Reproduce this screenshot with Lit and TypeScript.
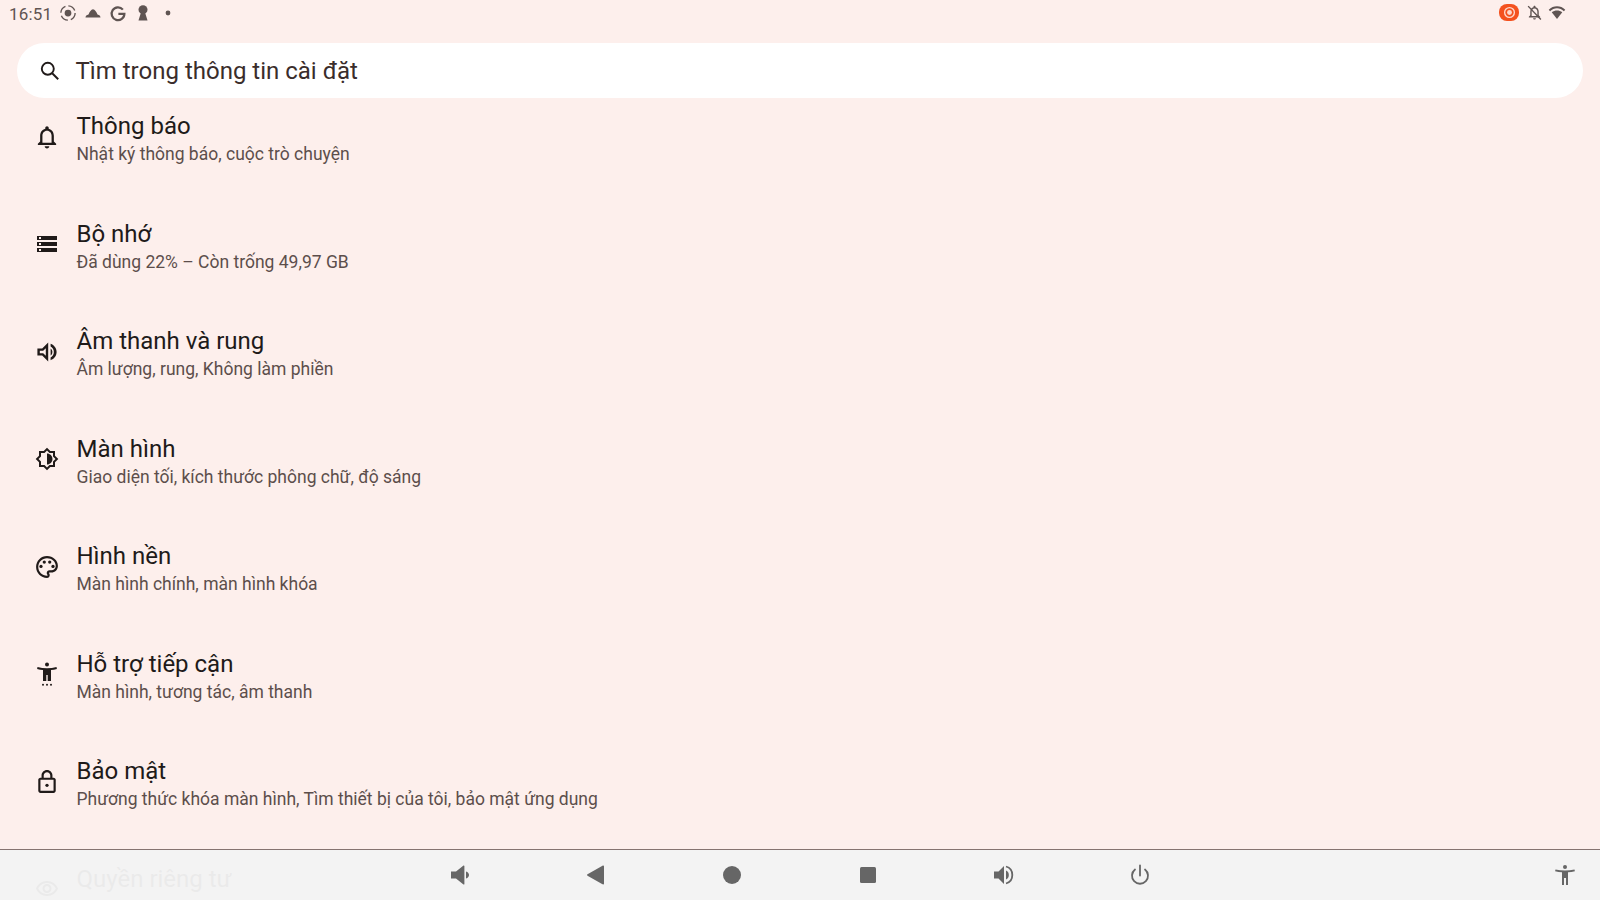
import { LitElement, html, css, svg } from "lit";
import { customElement } from "lit/decorators.js";

const I: Record<string, { box: string; art: unknown }> = {
  bell: { box: "1.500 1.500 21 21", art: svg`<path d="M12 22c1.100 0 2-.9 2-2h-4c0 1.100.9 2 2 2zm6-6v-5c0-3.070-1.630-5.640-4.500-6.320V4c0-.83-.67-1.500-1.500-1.500s-1.500.67-1.500 1.500v.68C7.640 5.360 6 7.920 6 11v5l-2 2v1h16v-1l-2-2zm-2 1H8v-6c0-2.480 1.510-4.500 4-4.500s4 2.020 4 4.500v6z"/>` },
  storage: { box: "0 0 24 24", art: svg`<path d="M2 20h20v-4H2v4zm2-3h2v2H4v-2zM2 4v4h20V4H2zm4 3H4V5h2v2zm-4 7h20v-4H2v4zm2-3h2v2H4v-2z"/>` },
  sound: { box: "1 2 20 20", art: svg`<path d="M3 9v6h4l5 5V4L7 9H3zm7-.17v6.340L7.830 13H5v-2h2.830L10 8.830z"/><path d="M14 5.200c3 1 5 3.700 5 6.800s-2 5.800-5 6.800v-2.300c1.700-.8 2.700-2.500 2.700-4.500s-1-3.700-2.700-4.500z"/><path d="M14 9c1 .6 1.500 1.700 1.500 3s-.5 2.400-1.500 3z"/>` },
  display: { box: "0 0 24 24", art: svg`<path d="M20 15.310L23.310 12 20 8.690V4h-4.690L12 .69 8.690 4H4v4.690L.69 12 4 15.310V20h4.690L12 23.310 15.310 20H20v-4.690zM18 14.480V18h-3.520L12 20.480 9.520 18H6v-3.520L3.520 12 6 9.520V6h3.520L12 3.520 14.480 6H18v3.520L20.480 12 18 14.480zM12 6.500v11c3.030 0 5.500-2.470 5.500-5.500S15.030 6.500 12 6.500z"/>` },
  palette: { box: "1 1 22 22", art: svg`<path d="M12 2C6.490 2 2 6.490 2 12s4.490 10 10 10c1.380 0 2.500-1.120 2.500-2.500 0-.61-.23-1.200-.64-1.670-.08-.1-.13-.21-.13-.33 0-.28.22-.5.5-.5H16c3.310 0 6-2.690 6-6 0-4.960-4.490-9-10-9zm4 13h-1.770c-1.380 0-2.500 1.120-2.500 2.500 0 .61.22 1.190.63 1.650.06.07.14.19.14.35 0 .28-.22.5-.5.5-4.410 0-8-3.590-8-8s3.590-8 8-8 8 3.140 8 7c0 2.210-1.790 4-4 4z"/><circle cx="6.500" cy="11.500" r="1.500"/><circle cx="9.500" cy="7.500" r="1.500"/><circle cx="14.500" cy="7.500" r="1.500"/><circle cx="17.500" cy="11.500" r="1.500"/>` },
  a11y: { box: "0 0 24 24", art: svg`<circle cx="12" cy="2.500" r="2"/><path d="M2.500 5c3 .8 6.200 1.200 9.500 1.200S18.500 5.800 21.500 5l.4 2c-2 .5-4 .9-5.900 1v11h-3.300v-6h-1.400v6H8V8C6.100 7.900 4.100 7.500 2.100 7z"/><circle cx="8" cy="22.700" r="1"/><circle cx="12" cy="22.700" r="1"/><circle cx="16" cy="22.700" r="1"/>` },
  lock: { box: "1 1 22 22", art: svg`<path d="M18 8h-1V6c0-2.760-2.240-5-5-5S7 3.240 7 6v2H6c-1.100 0-2 .9-2 2v10c0 1.100.9 2 2 2h12c1.100 0 2-.9 2-2V10c0-1.100-.9-2-2-2zM9 6c0-1.660 1.340-3 3-3s3 1.340 3 3v2H9V6zm9 14H6V10h12v10z"/><circle cx="12" cy="15" r="1.500"/>` },
  eye: { box: "0 0 24 24", art: svg`<path d="M12 6c3.790 0 7.170 2.130 8.820 5.500C19.170 14.870 15.790 17 12 17s-7.170-2.130-8.820-5.500C4.830 8.130 8.210 6 12 6m0-2C7 4 2.730 7.110 1 11.500 2.730 15.890 7 19 12 19s9.270-3.110 11-7.500C21.270 7.110 17 4 12 4zm0 5c1.380 0 2.500 1.120 2.500 2.500S13.380 14 12 14s-2.500-1.120-2.500-2.500S10.620 9 12 9m0-2c-2.480 0-4.500 2.020-4.500 4.500S9.520 16 12 16s4.500-2.020 4.500-4.500S14.480 7 12 7z"/>` },
};

const rows = [
  ["bell", "Thông báo", "Nhật ký thông báo, cuộc trò chuyện"],
  ["storage", "Bộ nhớ", "Đã dùng 22% – Còn trống 49,97 GB"],
  ["sound", "Âm thanh và rung", "Âm lượng, rung, Không làm phiền"],
  ["display", "Màn hình", "Giao diện tối, kích thước phông chữ, độ sáng"],
  ["palette", "Hình nền", "Màn hình chính, màn hình khóa"],
  ["a11y", "Hỗ trợ tiếp cận", "Màn hình, tương tác, âm thanh"],
  ["lock", "Bảo mật", "Phương thức khóa màn hình, Tìm thiết bị của tôi, bảo mật ứng dụng"],
  ["eye", "Quyền riêng tư", ""],
];

const navIcons = [
  svg`<path d="M3 8.500h5L15.500 2.500c.4-.3.9 0 .9.500v18c0 .5-.5.8-.9.500L8 15.500H3z"/><path d="M18 8.500c2 .6 3 2 3 3.500s-1 2.900-3 3.500z"/>`,
  svg`<path d="M20 3.500v17c0 .8-.8 1.200-1.500.8L3.500 12.700c-.6-.4-.6-1.100 0-1.400L18.500 2.700c.7-.4 1.500 0 1.500.8z"/>`,
  svg`<circle cx="12" cy="12" r="9"/>`,
  svg`<rect x="4" y="4" width="16" height="16" rx="1.500"/>`,
  svg`<path d="M2 8.500h4.500L12 3v18l-5.500-5.500H2z"/><path d="M14 7.500c1.900.8 2.800 2.500 2.800 4.500s-.9 3.700-2.800 4.500z"/><path d="M14 3.500c3.800 1 6.300 4.500 6.300 8.500s-2.500 7.500-6.300 8.500" fill="none" stroke="currentColor" stroke-width="1.800"/>`,
  svg`<path d="M12 2.500v10" fill="none" stroke="currentColor" stroke-width="1.800" stroke-linecap="round"/><path d="M7 6.500a8 8 0 1 0 10 0" fill="none" stroke="currentColor" stroke-width="1.800" stroke-linecap="round"/>`,
];

@customElement("app-root")
export class AppRoot extends LitElement {
  static styles = css`
    :host {
      display: block;
      position: relative;
      width: 1600px;
      height: 900px;
      overflow: hidden;
      background: #fdefec;
      font-family: Roboto, "Noto Sans", sans-serif;
      color: #201a19;
    }
    svg { display: block; fill: currentColor; flex: none; }
    .status {
      height: 28px;
      display: flex;
      align-items: center;
      padding: 0 34px 0 9px;
      color: #5f5452;
    }
    .time { font-size: 17px; width: 46.500px; letter-spacing: 0.200px; }
    .si { width: 25px; display: flex; justify-content: center; margin-top: -2px; }
    .si svg { width: 18px; height: 18px; }
    .spacer { flex: 1; }
    .rec {
      width: 20px; height: 17px; border-radius: 8px;
      background: #f4511e;
      display: flex; align-items: center; justify-content: center;
      color: #ffd9cd;
      margin: -3px 7px 0 0;
    }
    .rec svg { width: 13px; height: 13px; }
    .off { width: 17px; height: 17px; margin: -3px 5px 0 0; }
    .wifi { width: 18px; height: 18px; margin-top: -3px; }
    .search {
      position: relative;
      z-index: 1;
      margin: 15px 17px 0 16.500px;
      height: 55px;
      border-radius: 28px;
      background: #fff;
      display: flex;
      align-items: center;
      padding-left: 21px;
      gap: 14px;
      font-size: 24px;
      color: #3a2d2b;
    }
    .search svg { width: 24px; height: 24px; color: #201a19; }
    .list { margin-top: -14px; }
    .row {
      height: 107.500px;
      display: flex;
      align-items: center;
      padding-left: 35px;
      gap: 17.500px;
    }
    .row > svg { width: 24px; height: 24px; margin-top: -2px; }
    .title { font-size: 24px; line-height: 30px; }
    .sub { font-size: 17.500px; line-height: 26px; min-height: 26px; color: #5c4e4b; }
    .text { margin-top: 3px; }
    .nav {
      position: absolute;
      left: 0; right: 0; bottom: 0;
      height: 50px;
      border-top: 1px solid #857370;
      background: rgba(242, 242, 242, 0.96);
      display: grid;
      grid-template-columns: 1fr auto 1fr;
      align-items: center;
      color: #666;
    }
    .keys { display: flex; grid-column: 2; }
    .key { width: 136px; display: flex; justify-content: center; }
    .key svg, .end svg { width: 24px; height: 24px; }
    .end { display: flex; justify-content: flex-end; padding-right: 23px; }
  `;

  render() {
    return html`
      <div class="status">
        <span class="time">16:51</span>
        <span class="si"><svg viewBox="0 0 24 24"><circle cx="12" cy="12" r="4.500"/><circle cx="12" cy="12" r="9.500" fill="none" stroke="currentColor" stroke-width="1.800" stroke-dasharray="11 4"/></svg></span>
        <span class="si"><svg viewBox="0 0 24 24"><path d="M2 18c0-2 1.500-3.500 4-4 1.500-3.500 3.500-7 6-7s4.500 3.500 6 7c2.500.5 4 2 4 4z"/></svg></span>
        <span class="si"><svg viewBox="0 0 24 24"><path d="M18.500 7.500A8.500 8.500 0 1 0 20.500 13H12.500" fill="none" stroke="currentColor" stroke-width="3"/></svg></span>
        <span class="si"><svg viewBox="0 0 24 24"><circle cx="12" cy="7.500" r="6"/><path d="M10 9h4l4 13H6z"/></svg></span>
        <span class="si"><svg viewBox="0 0 24 24"><circle cx="12" cy="12" r="3.200"/></svg></span>
        <span class="spacer"></span>
        <span class="rec"><svg viewBox="0 0 24 24"><circle cx="12" cy="12" r="4.500"/><circle cx="12" cy="12" r="9" fill="none" stroke="currentColor" stroke-width="2.500"/></svg></span>
        <svg class="off" viewBox="0 0 24 24"><path d="M12 22c1.100 0 2-.9 2-2h-4c0 1.100.9 2 2 2zm6-6v-5c0-3.070-1.630-5.640-4.500-6.320V4c0-.83-.67-1.500-1.500-1.500s-1.500.67-1.500 1.500v.68C7.640 5.360 6 7.920 6 11v5l-2 2v1h16v-1l-2-2zm-2 1H8v-6c0-2.480 1.510-4.500 4-4.500s4 2.020 4 4.500v6z"/><path d="M3 3l18 19" stroke="currentColor" stroke-width="2"/></svg>
        <svg class="wifi" viewBox="0 0 24 24"><path d="M1 7.500C4 4.500 8 3 12 3s8 1.500 11 4.500l-1.800 2.200C18.500 7 15.500 5.500 12 5.500S5.500 7 2.800 9.700z"/><path d="M5 11c2-1.500 4.500-2.300 7-2.300s5 .8 7 2.300l-7 9z"/></svg>
      </div>
      <div class="search">
        <svg viewBox="0 0 24 24"><circle cx="9.800" cy="9.800" r="6" fill="none" stroke="currentColor" stroke-width="1.900"/><path d="M14.200 14.200l6 6" fill="none" stroke="currentColor" stroke-width="2"/></svg>
        <span>Tìm trong thông tin cài đặt</span>
      </div>
      <div class="list">
        ${rows.map(
          ([icon, title, sub]) => html`
            <div class="row">
              <svg viewBox=${I[icon].box}>${I[icon].art}</svg>
              <div class="text">
                <div class="title">${title}</div>
                <div class="sub">${sub}</div>
              </div>
            </div>
          `
        )}
      </div>
      <div class="nav">
        <div class="keys">
          ${navIcons.map((p) => html`<span class="key"><svg viewBox="0 0 24 24">${p}</svg></span>`)}
        </div>
        <div class="end">
          <svg viewBox="0 0 24 24"><circle cx="12" cy="4" r="2"/><path d="M2.500 6.500c3 .7 6.200 1 9.500 1s6.500-.3 9.500-1l.4 1.700c-2.300.6-4.700.9-6.900 1.100V22h-2v-7h-2v7H9V9.300C6.800 9.100 4.400 8.800 2.100 8.200z"/></svg>
        </div>
      </div>
    `;
  }
}
